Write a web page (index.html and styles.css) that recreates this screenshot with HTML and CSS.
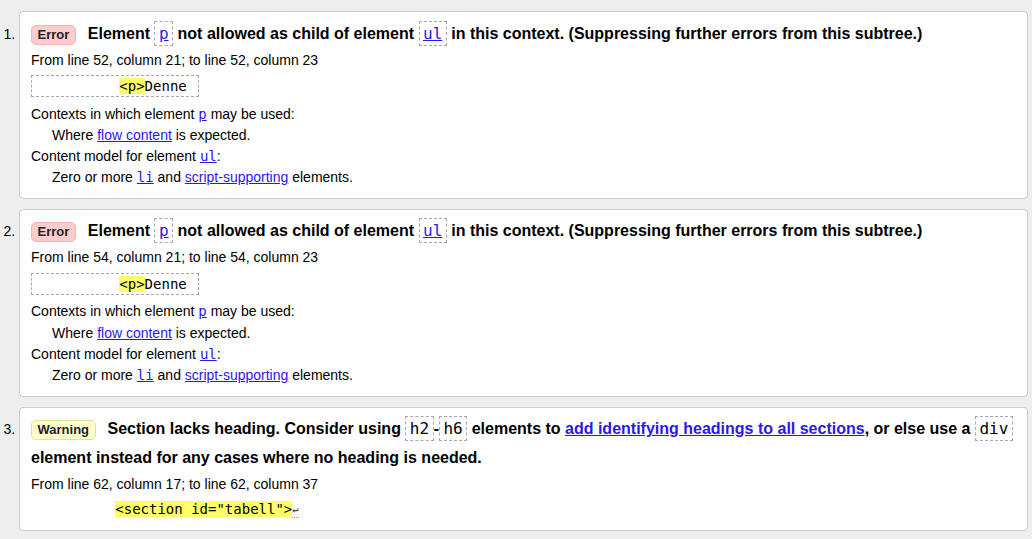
FILE: index.html
```html
<!DOCTYPE html>
<html lang="no">
<head>
<meta charset="utf-8">
<title>Validation messages</title>
<link rel="stylesheet" href="styles.css">
</head>
<body>
<ol class="messages">
  <li class="msg">
    <p class="head"><span class="badge error">Error</span>Element <code class="box"><a href="#">p</a></code> not allowed as child of element <code class="box"><a href="#">ul</a></code> in this context. (Suppressing further errors from this subtree.)</p>
    <p class="loc">From line 52, column 21; to line 52, column 23</p>
    <p class="extract"><code>          <mark>&lt;p&gt;</mark>Denne </code></p>
    <dl class="info">
      <dt>Contexts in which element <a href="#"><code>p</code></a> may be used:</dt>
      <dd>Where <a href="#">flow content</a> is expected.</dd>
      <dt>Content model for element <a href="#"><code>ul</code></a>:</dt>
      <dd>Zero or more <a href="#"><code>li</code></a> and <a href="#">script-supporting</a> elements.</dd>
    </dl>
  </li>
  <li class="msg">
    <p class="head"><span class="badge error">Error</span>Element <code class="box"><a href="#">p</a></code> not allowed as child of element <code class="box"><a href="#">ul</a></code> in this context. (Suppressing further errors from this subtree.)</p>
    <p class="loc">From line 54, column 21; to line 54, column 23</p>
    <p class="extract"><code>          <mark>&lt;p&gt;</mark>Denne </code></p>
    <dl class="info">
      <dt>Contexts in which element <a href="#"><code>p</code></a> may be used:</dt>
      <dd>Where <a href="#">flow content</a> is expected.</dd>
      <dt>Content model for element <a href="#"><code>ul</code></a>:</dt>
      <dd>Zero or more <a href="#"><code>li</code></a> and <a href="#">script-supporting</a> elements.</dd>
    </dl>
  </li>
  <li class="msg">
    <p class="head"><span class="badge warning">Warning</span>Section lacks heading. Consider using <code class="box">h2</code>-<code class="box">h6</code> elements to <a href="#">add identifying headings to all sections</a>, or else use a <code class="box">div</code> element instead for any cases where no heading is needed.</p>
    <p class="loc">From line 62, column 17; to line 62, column 37</p>
    <p class="extract plain"><code>          <mark>&lt;section id="tabell"&gt;</mark><span class="lf">↩</span></code></p>
  </li>
</ol>
</body>
</html>
```

FILE: styles.css
```css
* { box-sizing: border-box; }
html, body { margin: 0; background: #eeeeee; }
body {
  font-family: "Liberation Sans", Arial, Helvetica, sans-serif;
  font-size: 14px;
  color: #000;
}
a { color: #2b17ee; text-decoration: underline; }
code { font-family: "DejaVu Sans Mono", Menlo, monospace; font-size: 1em; }

.messages {
  margin: 0;
  padding: 11px 4px 8px 19px;
  list-style: decimal outside;
}
.msg {
  background: #fff;
  border: 1px solid #cccccc;
  border-radius: 4px;
  padding: 6.5px 11px 9.5px;
  margin-bottom: 9.5px;
  line-height: 21px;
}
.msg:last-child { margin-bottom: 0; }

.head {
  margin: 0 0 2px;
  font-size: 16px;
  font-weight: bold;
  line-height: 29px;
}
.badge {
  display: inline-block;
  font-size: 13px;
  line-height: 18px;
  padding: 0 5.5px;
  border: 1px solid;
  border-radius: 5px;
  margin-right: 12px;
  color: #222;
}
.badge.error { background: #ffcccc; border-color: #f3b3b3; }
.badge.warning { background: #ffffcc; border-color: #e0e0a0; }

.box {
  font-weight: normal;
  border: 1px dashed #a8a8a8;
  padding: 2px 3.5px;
}
.loc { margin: 0; }

.extract {
  margin: 4.5px 0 6.5px;
  display: inline-block;
  border: 1px dashed #a8a8a8;
  padding: 2px 3px;
  line-height: 16px;
}
.extract code { white-space: pre; }
.extract mark { background: #ffff66; color: #000; }
.extract.plain {
  display: block;
  border: none;
  padding: 0;
  margin: 6px 0 1.5px;
}
.lf {
  font-size: 11px;
  color: #333;
  border-bottom: 1px dotted #999;
}

.info { margin: 0; line-height: 21.33px; }
.info dt { margin: 0; }
.info dd { margin: 0; padding-left: 21px; }
```
